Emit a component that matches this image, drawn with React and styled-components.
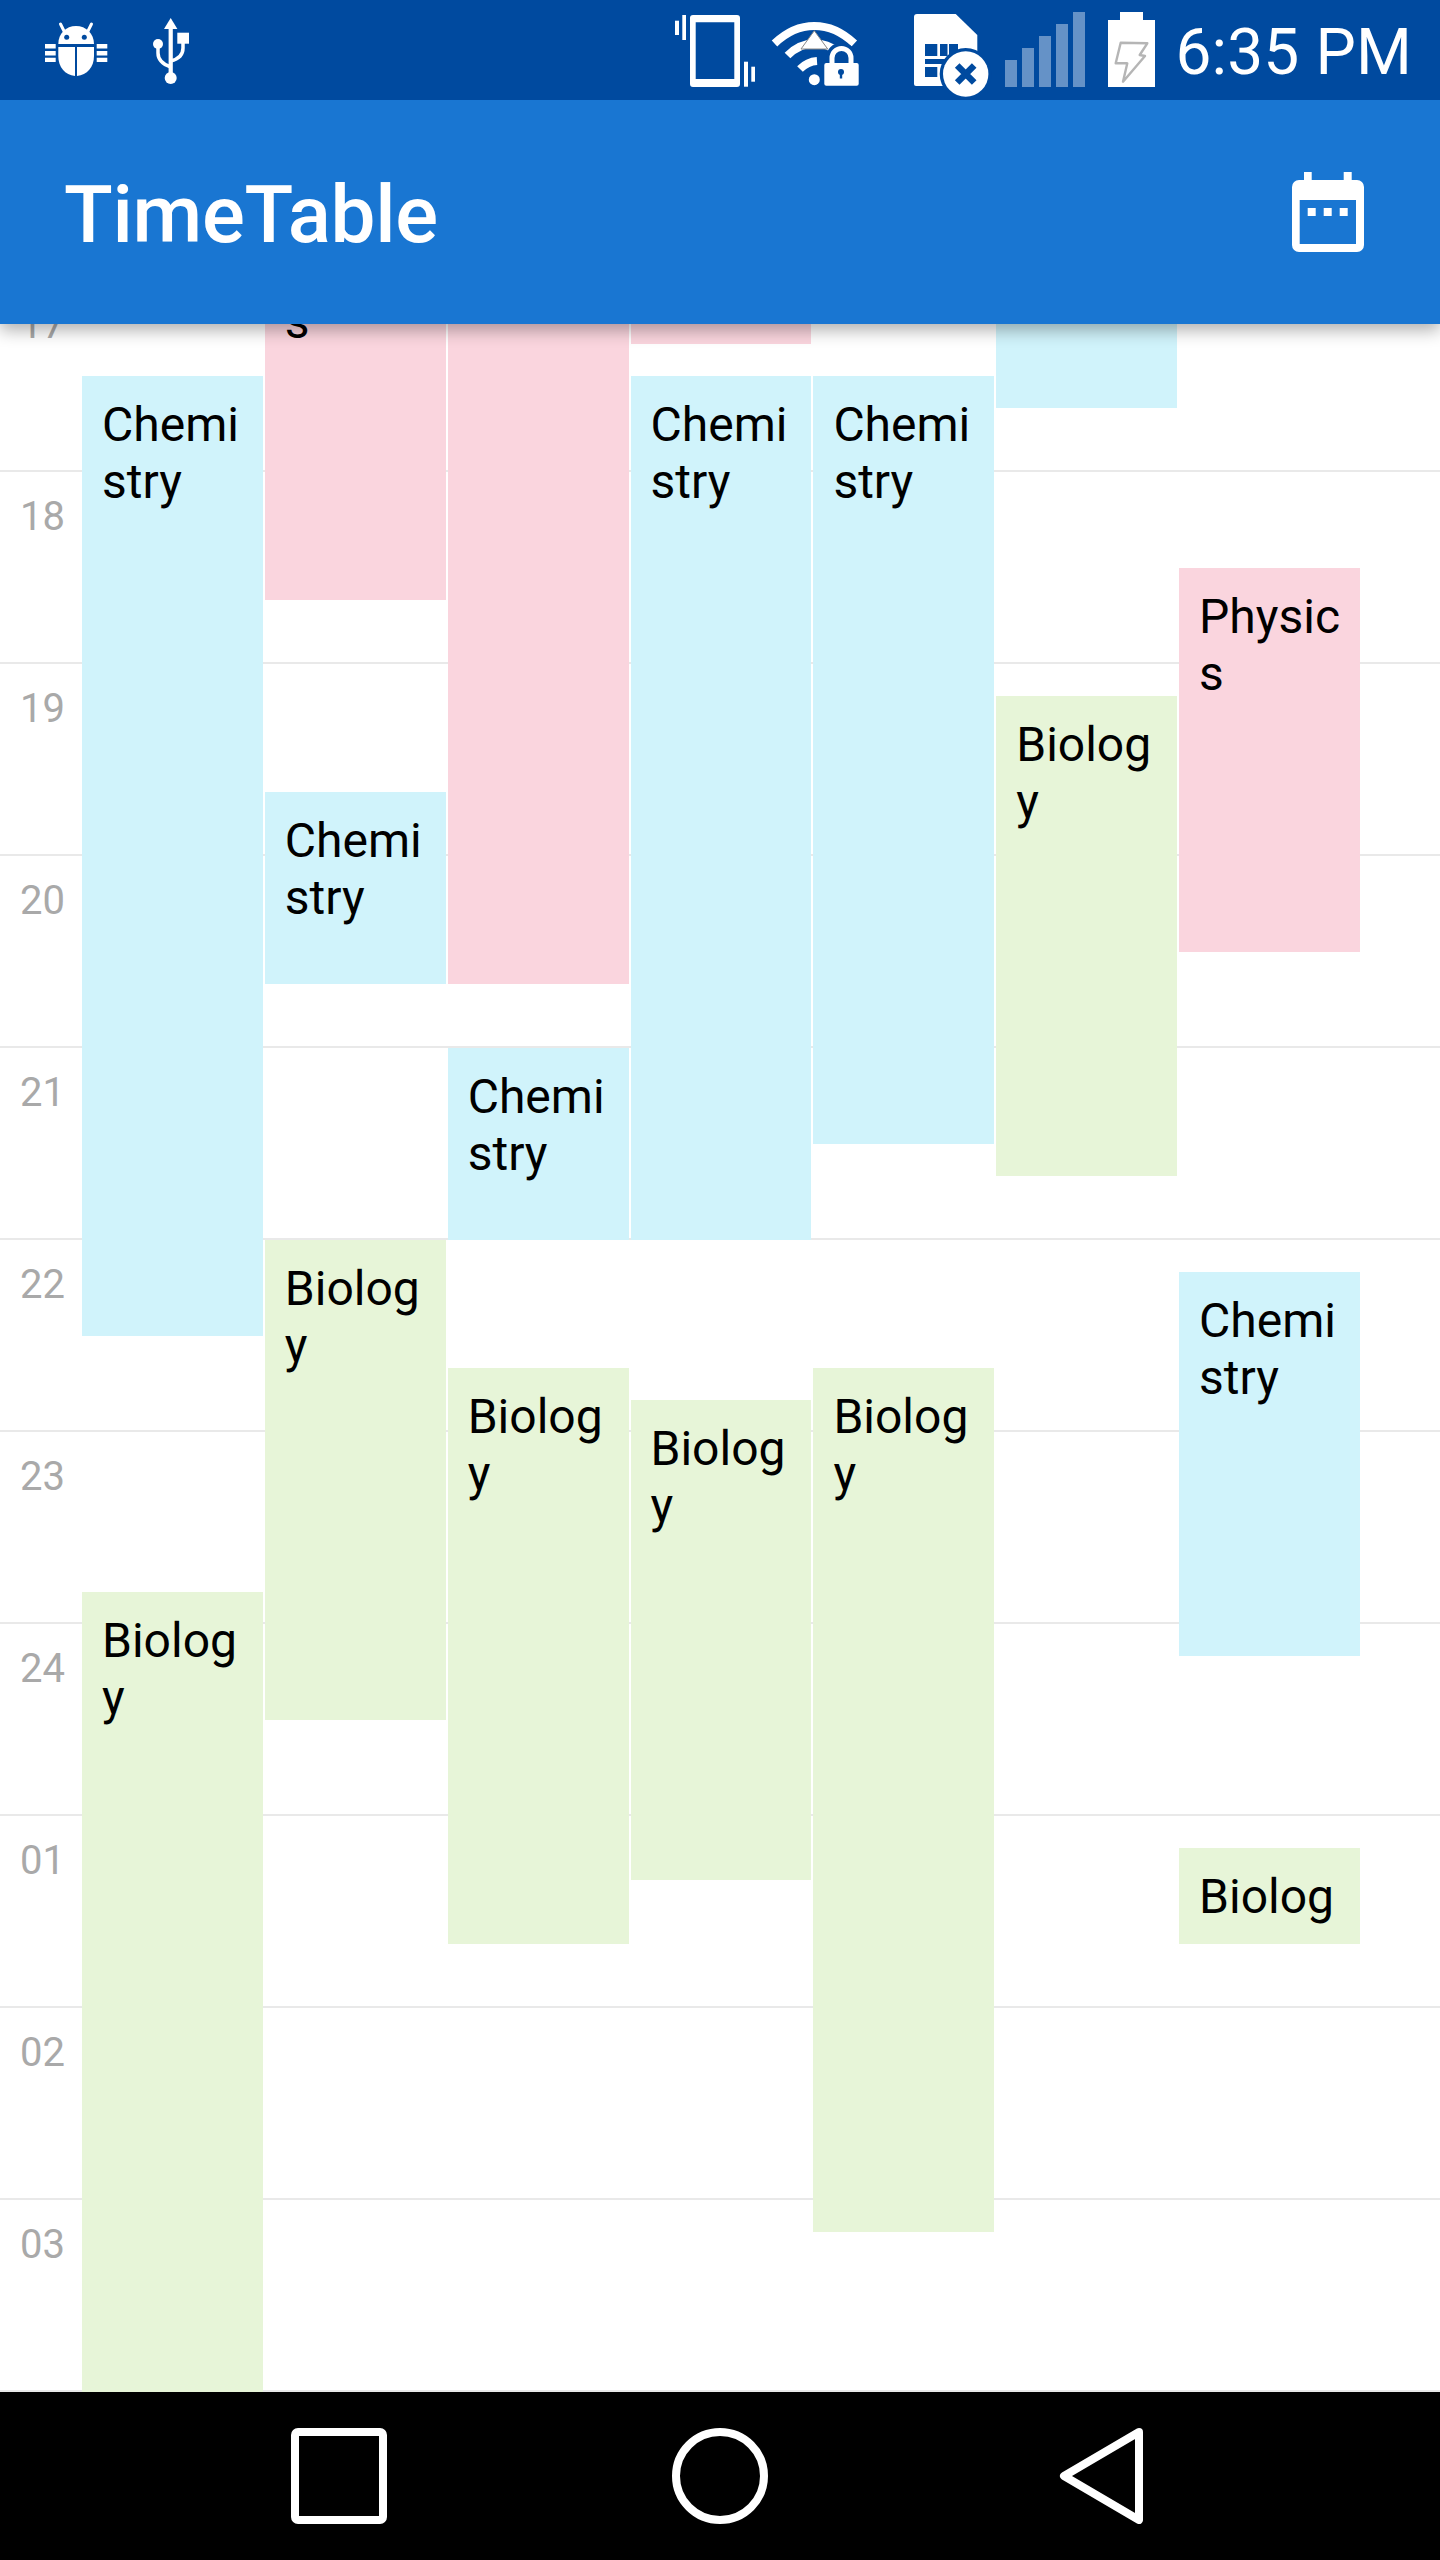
import React from "react";
import styled, { createGlobalStyle } from "styled-components";

const Global = createGlobalStyle`
  html, body { margin: 0; padding: 0; background: #fff; }
  * { box-sizing: border-box; }
`;

const BAR = "#004A9F";
const SLOT = 32;
const ORIGIN = 192; // distance from the top of the first row to slot 0

const Screen = styled.div`
  width: 1440px;
  height: 2560px;
  display: flex;
  flex-direction: column;
  overflow: hidden;
  background: #fff;
  font-family: Roboto, "Liberation Sans", sans-serif;
`;
const Header = styled.header`
  flex: none;
  position: relative;
  z-index: 2;
  box-shadow: 0 6px 16px rgba(0, 0, 0, 0.32);
`;
const StatusBar = styled.div`
  height: 100px;
  background: ${BAR};
  display: flex;
  justify-content: space-between;
  align-items: flex-start;
  padding: 0 28px 0 45px;
`;
const IconGroup = styled.div`
  display: flex;
  align-items: flex-start;
`;
const StatusIcon = styled.svg`
  display: block;
  flex: none;
  margin-top: ${(p) => p.$top}px;
  margin-left: ${(p) => p.$left || 0}px;
  overflow: visible;
`;
const Clock = styled.div`
  margin-left: 20px;
  font-size: 64px;
  line-height: 106px;
  letter-spacing: 0.15px;
  color: #fff;
  white-space: nowrap;
`;
const Toolbar = styled.div`
  height: 224px;
  background: #1976d2;
  display: flex;
  align-items: center;
  justify-content: space-between;
  padding: 0 76px 0 64px;
`;
const Title = styled.h1`
  margin: 0;
  padding-top: 6px;
  font-size: 80px;
  font-weight: 500;
  line-height: 94px;
  letter-spacing: -0.3px;
  color: #fff;
`;
const Timeline = styled.main`
  flex: 1;
  min-height: 0;
  overflow: hidden;
`;
const Scrolled = styled.div`
  position: relative;
  margin-top: -44px;
`;
const HourRow = styled.div`
  height: 192px;
  border-bottom: 2px solid #e9e9e9;
  padding: 21px 0 0 20px;
  font-size: 40px;
  line-height: 47px;
  color: #a9a9a9;
`;
const DayGrid = styled.div`
  position: absolute;
  inset: 0;
  display: grid;
  grid-template-columns: repeat(7, 180.857px);
  column-gap: 2px;
  padding-left: 82px;
`;
const DayColumn = styled.div`
  position: relative;
`;
const COLORS = {
  Chemistry: "#d0f3fb",
  Physics: "#fad5de",
  Biology: "#e7f5d8",
};
const Event = styled.div`
  position: absolute;
  left: 0;
  right: 0;
  top: ${(p) => ORIGIN + p.$from * SLOT}px;
  height: ${(p) => (p.$to - p.$from) * SLOT}px;
  overflow: hidden;
  padding: 20px 16px 20px 20px;
  background: ${(p) => COLORS[p.$name]};
  color: #000;
  font-size: 48px;
  line-height: 57px;
  word-break: break-all;
`;
const NavBar = styled.nav`
  flex: none;
  height: 168px;
  background: #000;
  display: grid;
  grid-template-columns: repeat(3, 381px);
  justify-content: center;
  justify-items: center;
  align-items: center;
`;
const NavIcon = styled.svg`
  display: block;
`;
const ToolbarIcon = styled.svg`
  display: block;
  flex: none;
`;

const HOURS = ["17", "18", "19", "20", "21", "22", "23", "24", "01", "02", "03"];

const DAYS = [
  [["Chemistry", -3, 27], ["Biology", 35, 70]],
  [["Physics", -8, 4], ["Chemistry", 10, 16], ["Biology", 24, 39]],
  [["Physics", -12, 16], ["Chemistry", 18, 24], ["Biology", 28, 46]],
  [["Physics", -14, -4], ["Chemistry", -3, 24], ["Biology", 29, 44]],
  [["Chemistry", -3, 21], ["Biology", 28, 55]],
  [["Chemistry", -14, -2], ["Biology", 7, 22]],
  [["Physics", 3, 15], ["Chemistry", 25, 37], ["Biology", 43, 46]],
];

const BugIcon = () => (
  <StatusIcon $top={23} width="62" height="53" viewBox="0 0 62 53" fill="#fff">
    <path d="M13.3 21C13.3 10.5 21 3 31 3s18 7.5 18 18z" />
    <circle cx="21.7" cy="14.3" r="2.5" fill={BAR} />
    <circle cx="39.3" cy="14.3" r="2.5" fill={BAR} />
    <path d="M15.5 1l3.5 7M46.5 1L43 8" stroke="#fff" strokeWidth="3" strokeLinecap="round" />
    <path d="M13.3 24H30v29C20 52 13.3 44 13.3 33z" />
    <path d="M49 24H32v29c10-1 17-9 17-20z" />
    <path d="M0 21h10.7v4.6H0zM0 28h10.7v4.4H0zM0 34.700h10.700v4.400H0z" />
    <path d="M51.700 21h10.600v4.600H51.700zM51.700 28h10.600v4.400H51.700zM51.700 34.700h10.600v4.400H51.700z" />
  </StatusIcon>
);

const UsbIcon = () => (
  <StatusIcon $top={18} $left={46} width="36" height="66" viewBox="0 0 36 66" fill="#fff">
    <path d="M17.700 0l6.700 11H11z" />
    <rect x="15.600" y="10" width="4.200" height="48" />
    <circle cx="17.700" cy="60" r="6" />
    <circle cx="5" cy="26" r="5" />
    <rect x="24.300" y="14.700" width="11.700" height="11" />
    <path d="M5 28v7c0 7 4 11 12.700 14M30 25v5c0 7-4 11-12.300 13" fill="none" stroke="#fff" strokeWidth="3.500" />
  </StatusIcon>
);

const VibrateIcon = () => (
  <StatusIcon $top={15} width="80" height="72" viewBox="0 0 80 72" fill="#fff">
    <path
      fillRule="evenodd"
      d="M18 0h44a3 3 0 0 1 3 3v66a3 3 0 0 1-3 3H18a3 3 0 0 1-3-3V3a3 3 0 0 1 3-3zM20.700 7.300V64h38.600V7.300z"
    />
    <rect x="0" y="5.700" width="4" height="14.300" />
    <rect x="7.300" y="0" width="3.700" height="25" />
    <rect x="69" y="46.700" width="4" height="25" />
    <rect x="76.300" y="51.700" width="3.700" height="15" />
  </StatusIcon>
);

const WifiLockIcon = () => (
  <StatusIcon $top={22} $left={17} width="87" height="64" viewBox="0 0 87 64" fill="#fff">
    <g fill="none" stroke="#fff">
      <path d="M2.500 21.500C14 10.500 27.500 4 42.300 4s28.500 6.500 40 17.500" strokeWidth="8" />
      <path d="M15.500 33.500C23 26 32 21.500 42.300 21.500s17 3 23 8" strokeWidth="8" />
      <path d="M28 47c4-4 9-7.500 17-8" strokeWidth="8" />
    </g>
    <circle cx="42.300" cy="57.700" r="5.500" />
    <path d="M42.300 8.700L55.700 27H29z" stroke="#888" strokeWidth="1" />
    <path d="M60 44v-8a9.500 9.500 0 0 1 19 0v8" fill="none" stroke={BAR} strokeWidth="12" />
    <rect x="49" y="38" width="40" height="28" rx="3" fill={BAR} />
    <path d="M60 44v-8a9.500 9.500 0 0 1 19 0v8" fill="none" stroke="#fff" strokeWidth="5" />
    <rect x="52.300" y="41" width="34.400" height="22.700" rx="2" />
    <circle cx="69" cy="50" r="3" fill={BAR} />
    <rect x="67.800" y="50" width="2.400" height="6.500" fill={BAR} />
  </StatusIcon>
);

const SimIcon = () => (
  <StatusIcon $top={14} $left={55} width="75" height="83" viewBox="0 0 75 83" fill="#fff">
    <path d="M3 0h38.700l21.600 21v49a2 2 0 0 1-2 2H2a2 2 0 0 1-2-2V3a3 3 0 0 1 3-3z" />
    <g fill={BAR}>
      <rect x="11" y="30" width="12.300" height="12" />
      <rect x="26" y="30" width="7.500" height="12" />
      <rect x="35" y="30" width="9" height="12" />
      <rect x="11" y="45" width="36" height="5" />
      <rect x="11" y="53" width="12.300" height="10" />
    </g>
    <circle cx="51.700" cy="60" r="26" fill={BAR} />
    <circle cx="51.700" cy="60" r="22.700" />
    <path d="M43.200 51.500l17 17M60.200 51.500l-17 17" stroke={BAR} strokeWidth="6.500" />
  </StatusIcon>
);

const SignalIcon = () => (
  <StatusIcon $top={12} $left={16} width="80" height="75" viewBox="0 0 80 75" fill="#6592c7">
    <rect x="0" y="48" width="12" height="27" />
    <rect x="17" y="36" width="12" height="39" />
    <rect x="34" y="24" width="12" height="51" />
    <rect x="51" y="12" width="12" height="63" />
    <rect x="68" y="0" width="12" height="75" />
  </StatusIcon>
);

const BatteryIcon = () => (
  <StatusIcon $top={12} $left={23} width="47" height="75" viewBox="0 0 47 75" fill="#fff">
    <rect x="12" y="0" width="23" height="9" />
    <rect x="0" y="8" width="47" height="67" />
    <path
      d="M12.700 30.700L39.300 31.300 31.700 43 37 44 15 69.700 19.300 51.300H7.700z"
      fill="none"
      stroke="#b5b5b5"
      strokeWidth="2.400"
      strokeLinejoin="round"
    />
  </StatusIcon>
);

const CalendarIcon = () => (
  <ToolbarIcon width="72" height="80" viewBox="0 0 72 80" fill="#fff">
    <path
      fillRule="evenodd"
      d="M12 0h7.700v8H51.700V0h8v8H65a7 7 0 0 1 7 7v58a7 7 0 0 1-7 7H7a7 7 0 0 1-7-7V15a7 7 0 0 1 7-7h5zM7.700 28v44H64V28z"
    />
    <rect x="15.700" y="36" width="8" height="8" />
    <rect x="31.700" y="36" width="8" height="8" />
    <rect x="47.700" y="36" width="8" height="8" />
  </ToolbarIcon>
);

export default function App() {
  return (
    <Screen>
      <Global />
      <Header>
        <StatusBar>
          <IconGroup>
            <BugIcon />
            <UsbIcon />
          </IconGroup>
          <IconGroup>
            <VibrateIcon />
            <WifiLockIcon />
            <SimIcon />
            <SignalIcon />
            <BatteryIcon />
            <Clock>6:35 PM</Clock>
          </IconGroup>
        </StatusBar>
        <Toolbar>
          <Title>TimeTable</Title>
          <CalendarIcon />
        </Toolbar>
      </Header>
      <Timeline>
        <Scrolled>
          {HOURS.map((h) => (
            <HourRow key={h}>{h}</HourRow>
          ))}
          <DayGrid>
            {DAYS.map((events, d) => (
              <DayColumn key={d}>
                {events.map(([name, from, to]) => (
                  <Event key={name} $name={name} $from={from} $to={to}>
                    {name}
                  </Event>
                ))}
              </DayColumn>
            ))}
          </DayGrid>
        </Scrolled>
      </Timeline>
      <NavBar>
        <NavIcon width="96" height="96" viewBox="0 0 96 96">
          <rect x="4" y="4" width="88" height="88" rx="3" fill="none" stroke="#fff" strokeWidth="8" />
        </NavIcon>
        <NavIcon width="96" height="96" viewBox="0 0 96 96">
          <circle cx="48" cy="48" r="44" fill="none" stroke="#fff" strokeWidth="8" />
        </NavIcon>
        <NavIcon width="84" height="96" viewBox="0 0 84 96">
          <path d="M80 4L5 48l75 44z" fill="none" stroke="#fff" strokeWidth="8" strokeLinejoin="round" />
        </NavIcon>
      </NavBar>
    </Screen>
  );
}
